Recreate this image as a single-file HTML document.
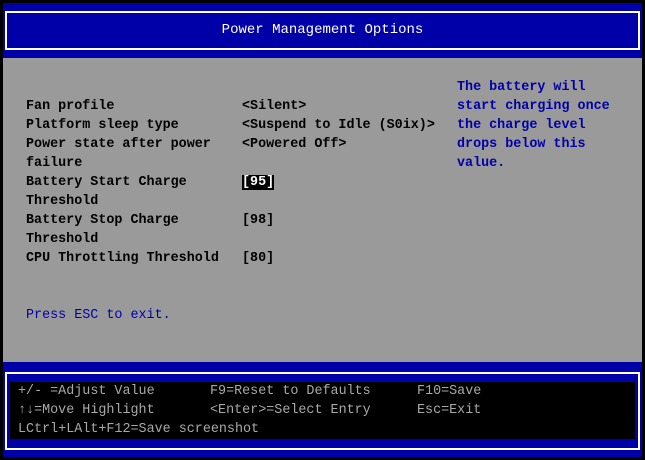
<!DOCTYPE html>
<html><head><style>
body{margin:0;width:645px;height:460px;background:#000;overflow:hidden;font-family:"Liberation Mono","DejaVu Sans Mono",monospace;font-size:13.4px;}
.a{position:absolute;white-space:pre;line-height:19px;}
#hdr{position:absolute;left:3px;top:3px;width:639px;height:55px;background:#0000a8;}
#tbox{position:absolute;left:5px;top:11px;width:631px;height:35px;border:2px solid #fff;}
#mid{position:absolute;left:3px;top:58px;width:639px;height:304px;background:#9a9a9a;}
#ftr{position:absolute;left:3px;top:362px;width:639px;height:95px;background:#0000a8;}
#fbox{position:absolute;left:5px;top:372px;width:631px;height:74px;border:2px solid #fff;}
#fin{position:absolute;left:10px;top:382px;width:625px;height:57px;background:#000;}
.t{color:#fff;font-size:14px;}
.k{color:#000;font-weight:bold;}
.b{color:#0000a8;font-weight:bold;}
.f{color:#a8a8a8;}
.hl{background:#000;color:#fff;}
</style></head><body>
<div id="hdr"></div><div id="tbox"></div>
<div class="a t" style="left:0;width:645px;text-align:center;top:21px;">Power Management Options</div>
<div id="mid"></div>
<div class="a k" style="left:26px;top:97px;">Fan profile
Platform sleep type
Power state after power
failure
Battery Start Charge
Threshold
Battery Stop Charge
Threshold
CPU Throttling Threshold</div>
<div class="a k" style="left:242px;top:97px;">&lt;Silent&gt;
&lt;Suspend to Idle (S0ix)&gt;
&lt;Powered Off&gt;</div>
<div class="a k" style="left:242px;top:173px;"><span class="hl">[95]</span>

[98]

[80]</div>
<div class="a b" style="left:457px;top:78px;">The battery will
start charging once
the charge level
drops below this
value.</div>
<div class="a b" style="left:26px;top:306px;font-weight:normal;">Press ESC to exit.</div>
<div id="ftr"></div><div id="fbox"></div><div id="fin"></div>
<div class="a f" style="left:18px;top:382px;">+/- =Adjust Value
↑↓=Move Highlight
LCtrl+LAlt+F12=Save screenshot</div>
<div class="a f" style="left:210px;top:382px;">F9=Reset to Defaults
&lt;Enter&gt;=Select Entry</div>
<div class="a f" style="left:417px;top:382px;">F10=Save
Esc=Exit</div>
</body></html>
